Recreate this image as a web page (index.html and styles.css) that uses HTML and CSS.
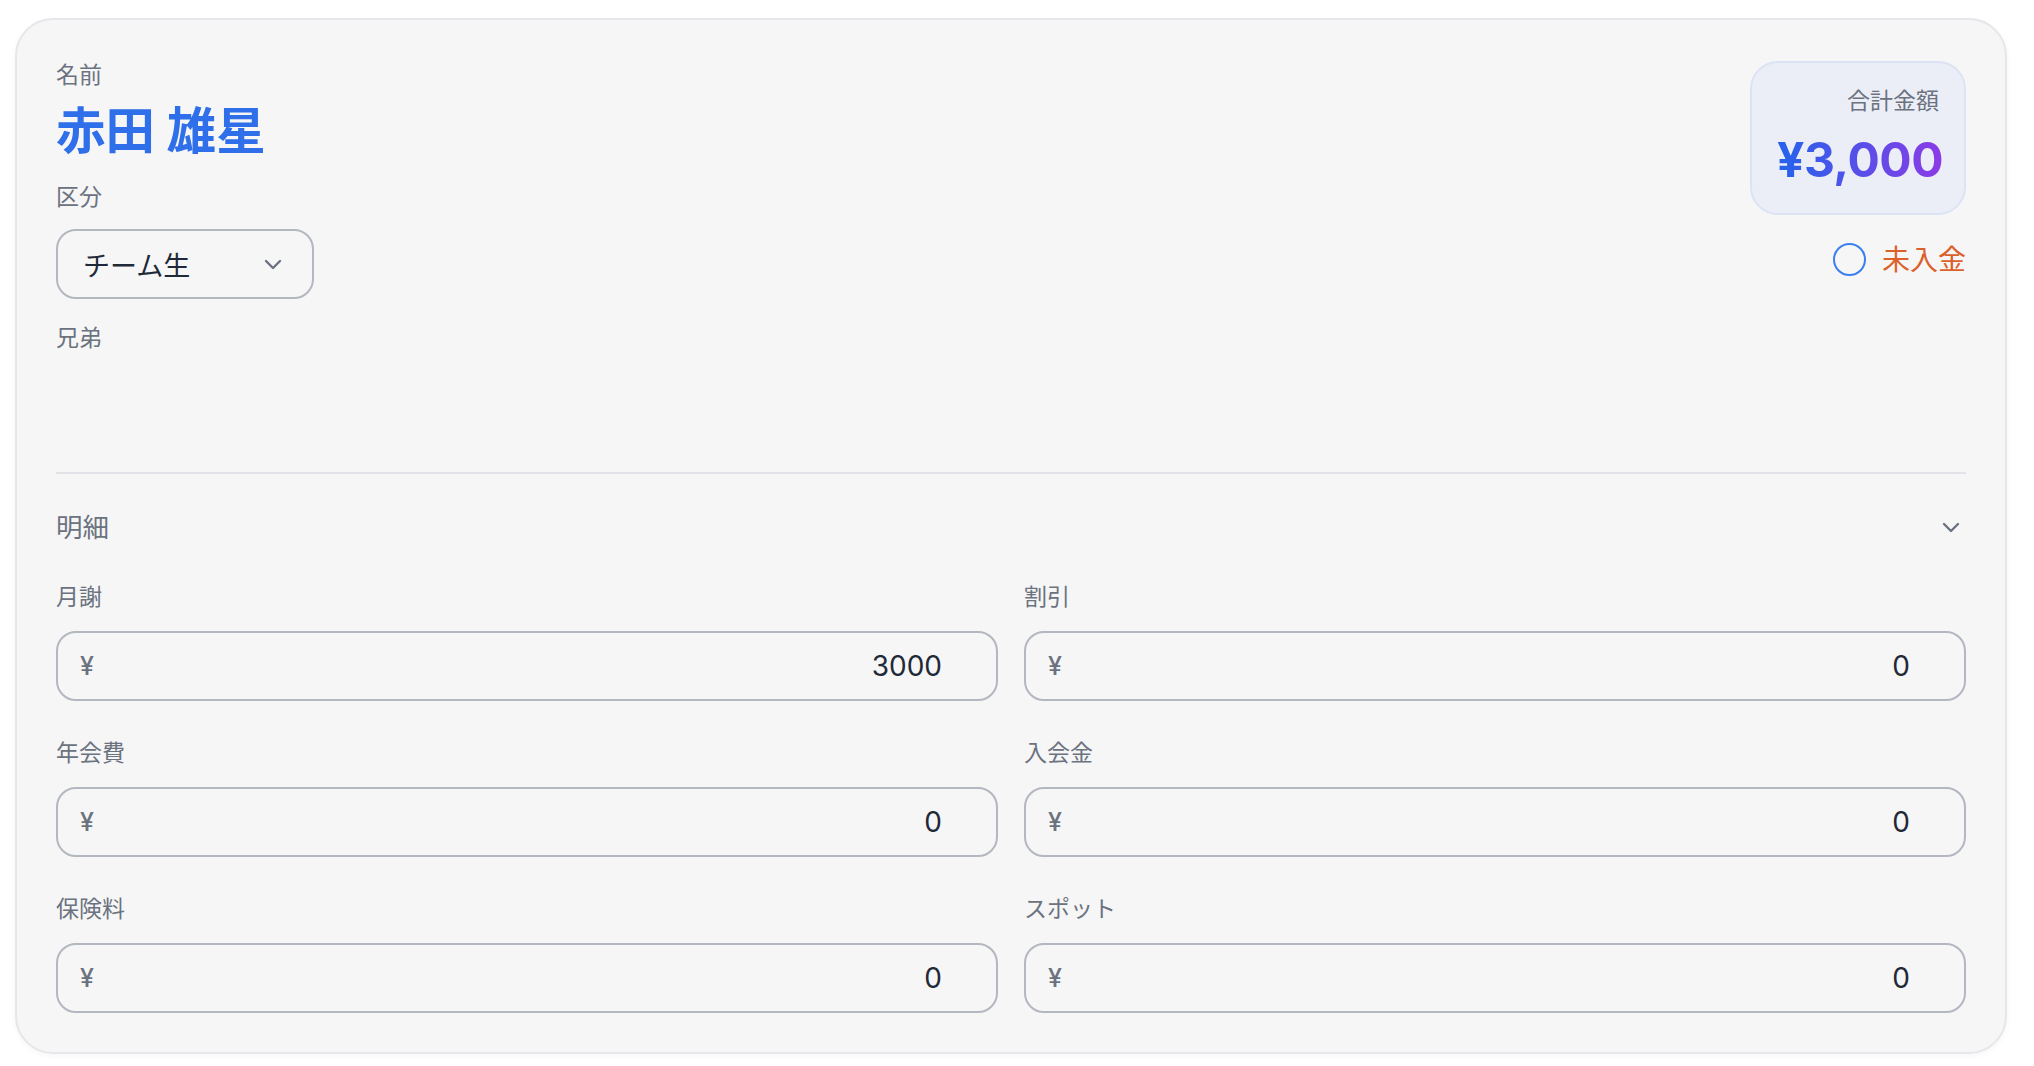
FILE: index.html
```html
<!DOCTYPE html>
<html lang="ja">
<head>
<meta charset="utf-8">
<title>会員</title>
<link rel="stylesheet" href="styles.css">
</head>
<body>
<div class="card">
  <div class="header">
    <div class="header-left">
      <div class="label">名前</div>
      <div class="name">赤田 雄星</div>
      <div class="label label-gap">区分</div>
      <div class="select">
        <span class="select-text">チーム生</span>
        <svg class="select-chev" width="18" height="11" viewBox="0 0 18 11"><path d="M2 2 L9 9 L16 2" fill="none" stroke="#6b7280" stroke-width="2.4" stroke-linecap="round" stroke-linejoin="round"/></svg>
      </div>
    </div>
    <div class="header-right">
      <div class="total">
        <div class="total-label">合計金額</div>
        <div class="total-amount">¥3,000</div>
      </div>
      <div class="status">
        <span class="status-circle"></span>
        <span class="status-text">未入金</span>
      </div>
    </div>
  </div>
  <div class="siblings">
    <div class="label">兄弟</div>
  </div>
  <div class="details">
    <div class="details-head">
      <span class="details-title">明細</span>
      <svg width="18" height="11" viewBox="0 0 18 11"><path d="M2 2 L9 9 L16 2" fill="none" stroke="#6b7280" stroke-width="2.4" stroke-linecap="round" stroke-linejoin="round"/></svg>
    </div>
    <div class="grid">
      <div class="field">
        <div class="label field-label">月謝</div>
        <div class="money"><span class="yen">¥</span><input class="num" type="text" value="3000"></div>
      </div>
      <div class="field">
        <div class="label field-label">割引</div>
        <div class="money"><span class="yen">¥</span><input class="num" type="text" value="0"></div>
      </div>
      <div class="field">
        <div class="label field-label">年会費</div>
        <div class="money"><span class="yen">¥</span><input class="num" type="text" value="0"></div>
      </div>
      <div class="field">
        <div class="label field-label">入会金</div>
        <div class="money"><span class="yen">¥</span><input class="num" type="text" value="0"></div>
      </div>
      <div class="field">
        <div class="label field-label">保険料</div>
        <div class="money"><span class="yen">¥</span><input class="num" type="text" value="0"></div>
      </div>
      <div class="field">
        <div class="label field-label">スポット</div>
        <div class="money"><span class="yen">¥</span><input class="num" type="text" value="0"></div>
      </div>
    </div>
  </div>
</div>
</body>
</html>
```

FILE: styles.css
```css
* { box-sizing: border-box; }
html, body { margin: 0; padding: 0; background: #ffffff; }
body {
  font-family: "Inter", "Noto Sans CJK JP", sans-serif;
  padding: 18px 27px 11px 15px;
  color: #1f2937;
}
.card {
  background: #f6f6f6;
  border: 2px solid #e6e6eb;
  border-radius: 38px;
  padding: 39px;
  box-shadow: 0 2px 6px rgba(0, 0, 0, 0.04);
}
.header {
  display: flex;
  justify-content: space-between;
  align-items: flex-start;
}
.header-left { display: flex; flex-direction: column; align-items: flex-start; }
.label {
  font-size: 23px;
  line-height: 33.6px;
  color: #6b7280;
}
.name {
  margin-top: 8px;
  font-size: 49.5px;
  line-height: 60px;
  font-weight: 700;
  color: #2f6fe9;
}
.label-gap { margin-top: 20px; }
.select {
  margin-top: 15px;
  width: 258px;
  height: 70px;
  border: 2px solid #b3b7bf;
  border-radius: 20px;
  display: flex;
  align-items: center;
  justify-content: space-between;
  padding: 0 30px 0 25px;
}
.select-text { font-size: 27px; color: #1f2937; }
.header-right { display: flex; flex-direction: column; align-items: flex-end; }
.total {
  margin-top: 2px;
  width: 216px;
  background: #ebeef6;
  border: 2px solid #dbe3f4;
  border-radius: 28px;
  padding: 22px 25px 23px;
  text-align: right;
}
.total-label { font-size: 23px; line-height: 33.6px; color: #6b7280; }
.total-amount {
  margin-top: 11px;
  font-size: 48px;
  line-height: 60px;
  font-weight: 700;
  letter-spacing: -0.5px;
  background: linear-gradient(to right, #2563eb, #8b3be6);
  -webkit-background-clip: text;
  background-clip: text;
  color: transparent;
  display: inline-block;
}
.status {
  margin-top: 25px;
  display: flex;
  align-items: center;
  gap: 16px;
}
.status-circle {
  width: 33px;
  height: 33px;
  border: 2.5px solid #3b7ef0;
  border-radius: 50%;
}
.status-text { font-size: 28px; line-height: 40px; color: #dc6029; }
.siblings {
  margin-top: 23px;
  height: 150px;
}
.details {
  border-top: 2px solid #e2e2e8;
}
.details-head {
  display: flex;
  justify-content: space-between;
  align-items: center;
  padding: 34px 6px 0 0;
  margin-bottom: 34px;
}
.details-title { font-size: 26.5px; line-height: 38.4px; color: #6b7280; }
.grid {
  display: grid;
  grid-template-columns: 1fr 1fr;
  column-gap: 26px;
  row-gap: 35.5px;
}
.field-label { margin-bottom: 17px; }
.money {
  height: 70px;
  border: 2px solid #b3b7bf;
  border-radius: 20px;
  display: flex;
  align-items: center;
  padding: 0 54px 0 22px;
}
.yen { font-size: 25px; color: #6b7280; font-weight: 500; }
.num {
  flex: 1;
  min-width: 0;
  border: none;
  background: transparent;
  outline: none;
  text-align: right;
  font-family: "Inter", "Noto Sans CJK JP", sans-serif;
  font-size: 28px;
  color: #1f2937;
  padding: 0;
}
```
